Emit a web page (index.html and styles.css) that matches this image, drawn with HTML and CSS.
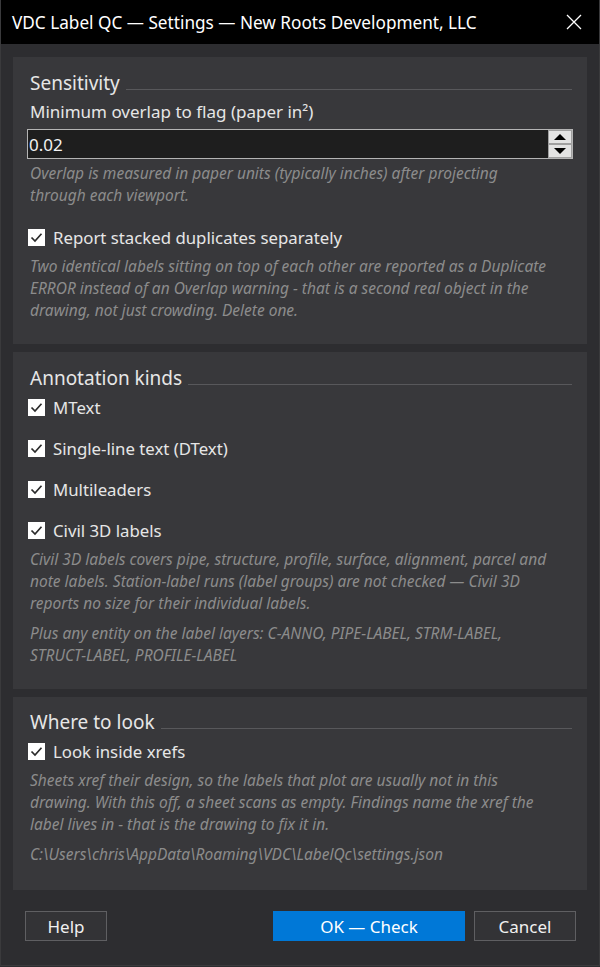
FILE: index.html
```html
<!DOCTYPE html>
<html lang="en">
<head>
    <meta charset="UTF-8">
    <title>VDC Label QC — Settings</title>
    <link rel="stylesheet" href="styles.css">
</head>
<body>
    <div class="window">
        <!-- Заголовок окна -->
        <div class="titlebar">
            <span class="title">VDC Label QC — Settings — New Roots Development, LLC</span>
            <svg class="close" width="16" height="16" viewBox="0 0 16 16">
                <path d="M1 1 L15 15 M15 1 L1 15" stroke="#fff" stroke-width="1.3" fill="none"/>
            </svg>
        </div>

        <div class="content">
            <!-- Sensitivity -->
            <section class="panel">
                <div class="panel-head"><span>Sensitivity</span><i class="rule"></i></div>
                <div class="label">Minimum overlap to flag (paper in²)</div>
                <div class="numbox">
                    <span class="numbox-value">0.02</span>
                    <div class="spin">
                        <div class="spin-btn"><i class="tri up"></i></div>
                        <div class="spin-btn"><i class="tri down"></i></div>
                    </div>
                </div>
                <p class="hint first">Overlap is measured in paper units (typically inches) after projecting through each viewport.</p>
                <div class="check spaced">
                    <span class="box"><svg width="17" height="17" viewBox="0 0 17 17"><path d="M3.5 8.5 L7 12 L13.5 4.8" stroke="#2b2b2b" stroke-width="1.7" fill="none"/></svg></span>
                    Report stacked duplicates separately
                </div>
                <p class="hint">Two identical labels sitting on top of each other are reported as a Duplicate ERROR instead of an Overlap warning - that is a second real object in the drawing, not just crowding. Delete one.</p>
            </section>

            <!-- Annotation kinds -->
            <section class="panel">
                <div class="panel-head"><span>Annotation kinds</span><i class="rule"></i></div>
                <div class="check">
                    <span class="box"><svg width="17" height="17" viewBox="0 0 17 17"><path d="M3.5 8.5 L7 12 L13.5 4.8" stroke="#2b2b2b" stroke-width="1.7" fill="none"/></svg></span>
                    MText
                </div>
                <div class="check">
                    <span class="box"><svg width="17" height="17" viewBox="0 0 17 17"><path d="M3.5 8.5 L7 12 L13.5 4.8" stroke="#2b2b2b" stroke-width="1.7" fill="none"/></svg></span>
                    Single-line text (DText)
                </div>
                <div class="check">
                    <span class="box"><svg width="17" height="17" viewBox="0 0 17 17"><path d="M3.5 8.5 L7 12 L13.5 4.8" stroke="#2b2b2b" stroke-width="1.7" fill="none"/></svg></span>
                    Multileaders
                </div>
                <div class="check">
                    <span class="box"><svg width="17" height="17" viewBox="0 0 17 17"><path d="M3.5 8.5 L7 12 L13.5 4.8" stroke="#2b2b2b" stroke-width="1.7" fill="none"/></svg></span>
                    Civil 3D labels
                </div>
                <p class="hint">Civil 3D labels covers pipe, structure, profile, surface, alignment, parcel and note labels. Station-label runs (label groups) are not checked — Civil 3D reports no size for their individual labels.</p>
                <p class="hint next">Plus any entity on the label layers: C-ANNO, PIPE-LABEL, STRM-LABEL, STRUCT-LABEL, PROFILE-LABEL</p>
            </section>

            <!-- Where to look -->
            <section class="panel">
                <div class="panel-head"><span>Where to look</span><i class="rule"></i></div>
                <div class="check">
                    <span class="box"><svg width="17" height="17" viewBox="0 0 17 17"><path d="M3.5 8.5 L7 12 L13.5 4.8" stroke="#2b2b2b" stroke-width="1.7" fill="none"/></svg></span>
                    Look inside xrefs
                </div>
                <p class="hint">Sheets xref their design, so the labels that plot are usually not in this drawing. With this off, a sheet scans as empty. Findings name the xref the label lives in - that is the drawing to fix it in.</p>
                <p class="hint next">C:\Users\chris\AppData\Roaming\VDC\LabelQc\settings.json</p>
            </section>
        </div>

        <!-- Кнопки -->
        <div class="footer">
            <button class="btn btn-help">Help</button>
            <button class="btn btn-ok">OK — Check</button>
            <button class="btn btn-cancel">Cancel</button>
        </div>
    </div>
</body>
</html>
```

FILE: styles.css
```css
* {
    margin: 0;
    padding: 0;
    box-sizing: border-box;
    font-family: 'Noto Sans', 'Open Sans', sans-serif;
}

body {
    width: 600px;
    height: 967px;
    background: #2d2d30;
    color: #e6e6e6;
    overflow: hidden;
}

.window {
    height: 966px;
    border-left: 1px solid #3a3a3c;
    border-right: 1px solid #3a3a3c;
    border-bottom: 1px solid #3a3a3c;
    display: flex;
    flex-direction: column;
}

/* Заголовок */
.titlebar {
    height: 44px;
    flex: none;
    background: #000;
    display: flex;
    align-items: center;
    justify-content: space-between;
    padding: 0 17px 0 11px;
}

.title {
    color: #fff;
    font-size: 17.2px;
}

.close {
    display: block;
}

/* Панели */
.content {
    padding: 13px 12px 0;
    display: flex;
    flex-direction: column;
    gap: 8px;
}

.panel {
    background: #38383b;
    padding: 12px 14px 23px;
}

.panel:nth-child(2) {
    padding-bottom: 23px;
}

.panel:nth-child(3) {
    padding-top: 11px;
    padding-bottom: 25px;
}

.panel-head {
    display: flex;
    align-items: baseline;
    gap: 6px;
    padding-left: 3px;
    padding-right: 1px;
    font-size: 19px;
    line-height: 28px;
    color: #e6e6e6;
}

.rule {
    flex: 1;
    height: 1px;
    background: #58585b;
}

.label {
    padding-left: 3px;
    margin-top: 3px;
    font-size: 17px;
    line-height: 24px;
}

/* Поле ввода */
.numbox {
    margin-top: 5px;
    height: 30px;
    background: #1e1e1e;
    border: 1px solid #b4b4b4;
    display: flex;
    align-items: center;
    justify-content: space-between;
    padding-left: 1px;
}

.numbox-value {
    font-size: 17px;
    color: #f2f2f2;
}

.spin {
    display: flex;
    flex-direction: column;
    width: 24px;
    height: 28px;
}

.spin-btn {
    flex: 1;
    background: #e3e3e3;
    border: 1px solid #a0a0a0;
    display: flex;
    align-items: center;
    justify-content: center;
}

.tri {
    width: 0;
    height: 0;
    border-left: 6px solid transparent;
    border-right: 6px solid transparent;
}

.tri.up { border-bottom: 6px solid #000; }
.tri.down { border-top: 6px solid #000; }

.hint {
    margin-top: 7px;
    padding: 0 18px 0 3px;
    font-size: 15.5px;
    font-style: italic;
    line-height: 22px;
    color: #8c8c8c;
}

.hint.first { margin-top: 3px; }
.hint.next { margin-top: 8px; }

/* Флажки */
.check {
    display: flex;
    align-items: center;
    gap: 8px;
    padding-left: 1px;
    height: 22px;
    margin-top: 4px;
    font-size: 16.8px;
    color: #e6e6e6;
}

.check + .check { margin-top: 19px; }
.check.spaced { margin-top: 20px; }

.box {
    width: 17px;
    height: 17px;
    background: #fff;
    display: block;
}

.box svg { display: block; }

/* Кнопки */
.footer {
    display: flex;
    padding: 21px 0 0 24px;
}

.btn {
    height: 30px;
    font-size: 17px;
    color: #f0f0f0;
    background: #333336;
    border: 1px solid #5f5f62;
}

.btn-help { width: 82px; }

.btn-ok {
    width: 192px;
    margin-left: auto;
    background: #0078d7;
    border-color: #0078d7;
    color: #fff;
}

.btn-cancel {
    width: 102px;
    margin-left: 9px;
    margin-right: 23px;
}
```
